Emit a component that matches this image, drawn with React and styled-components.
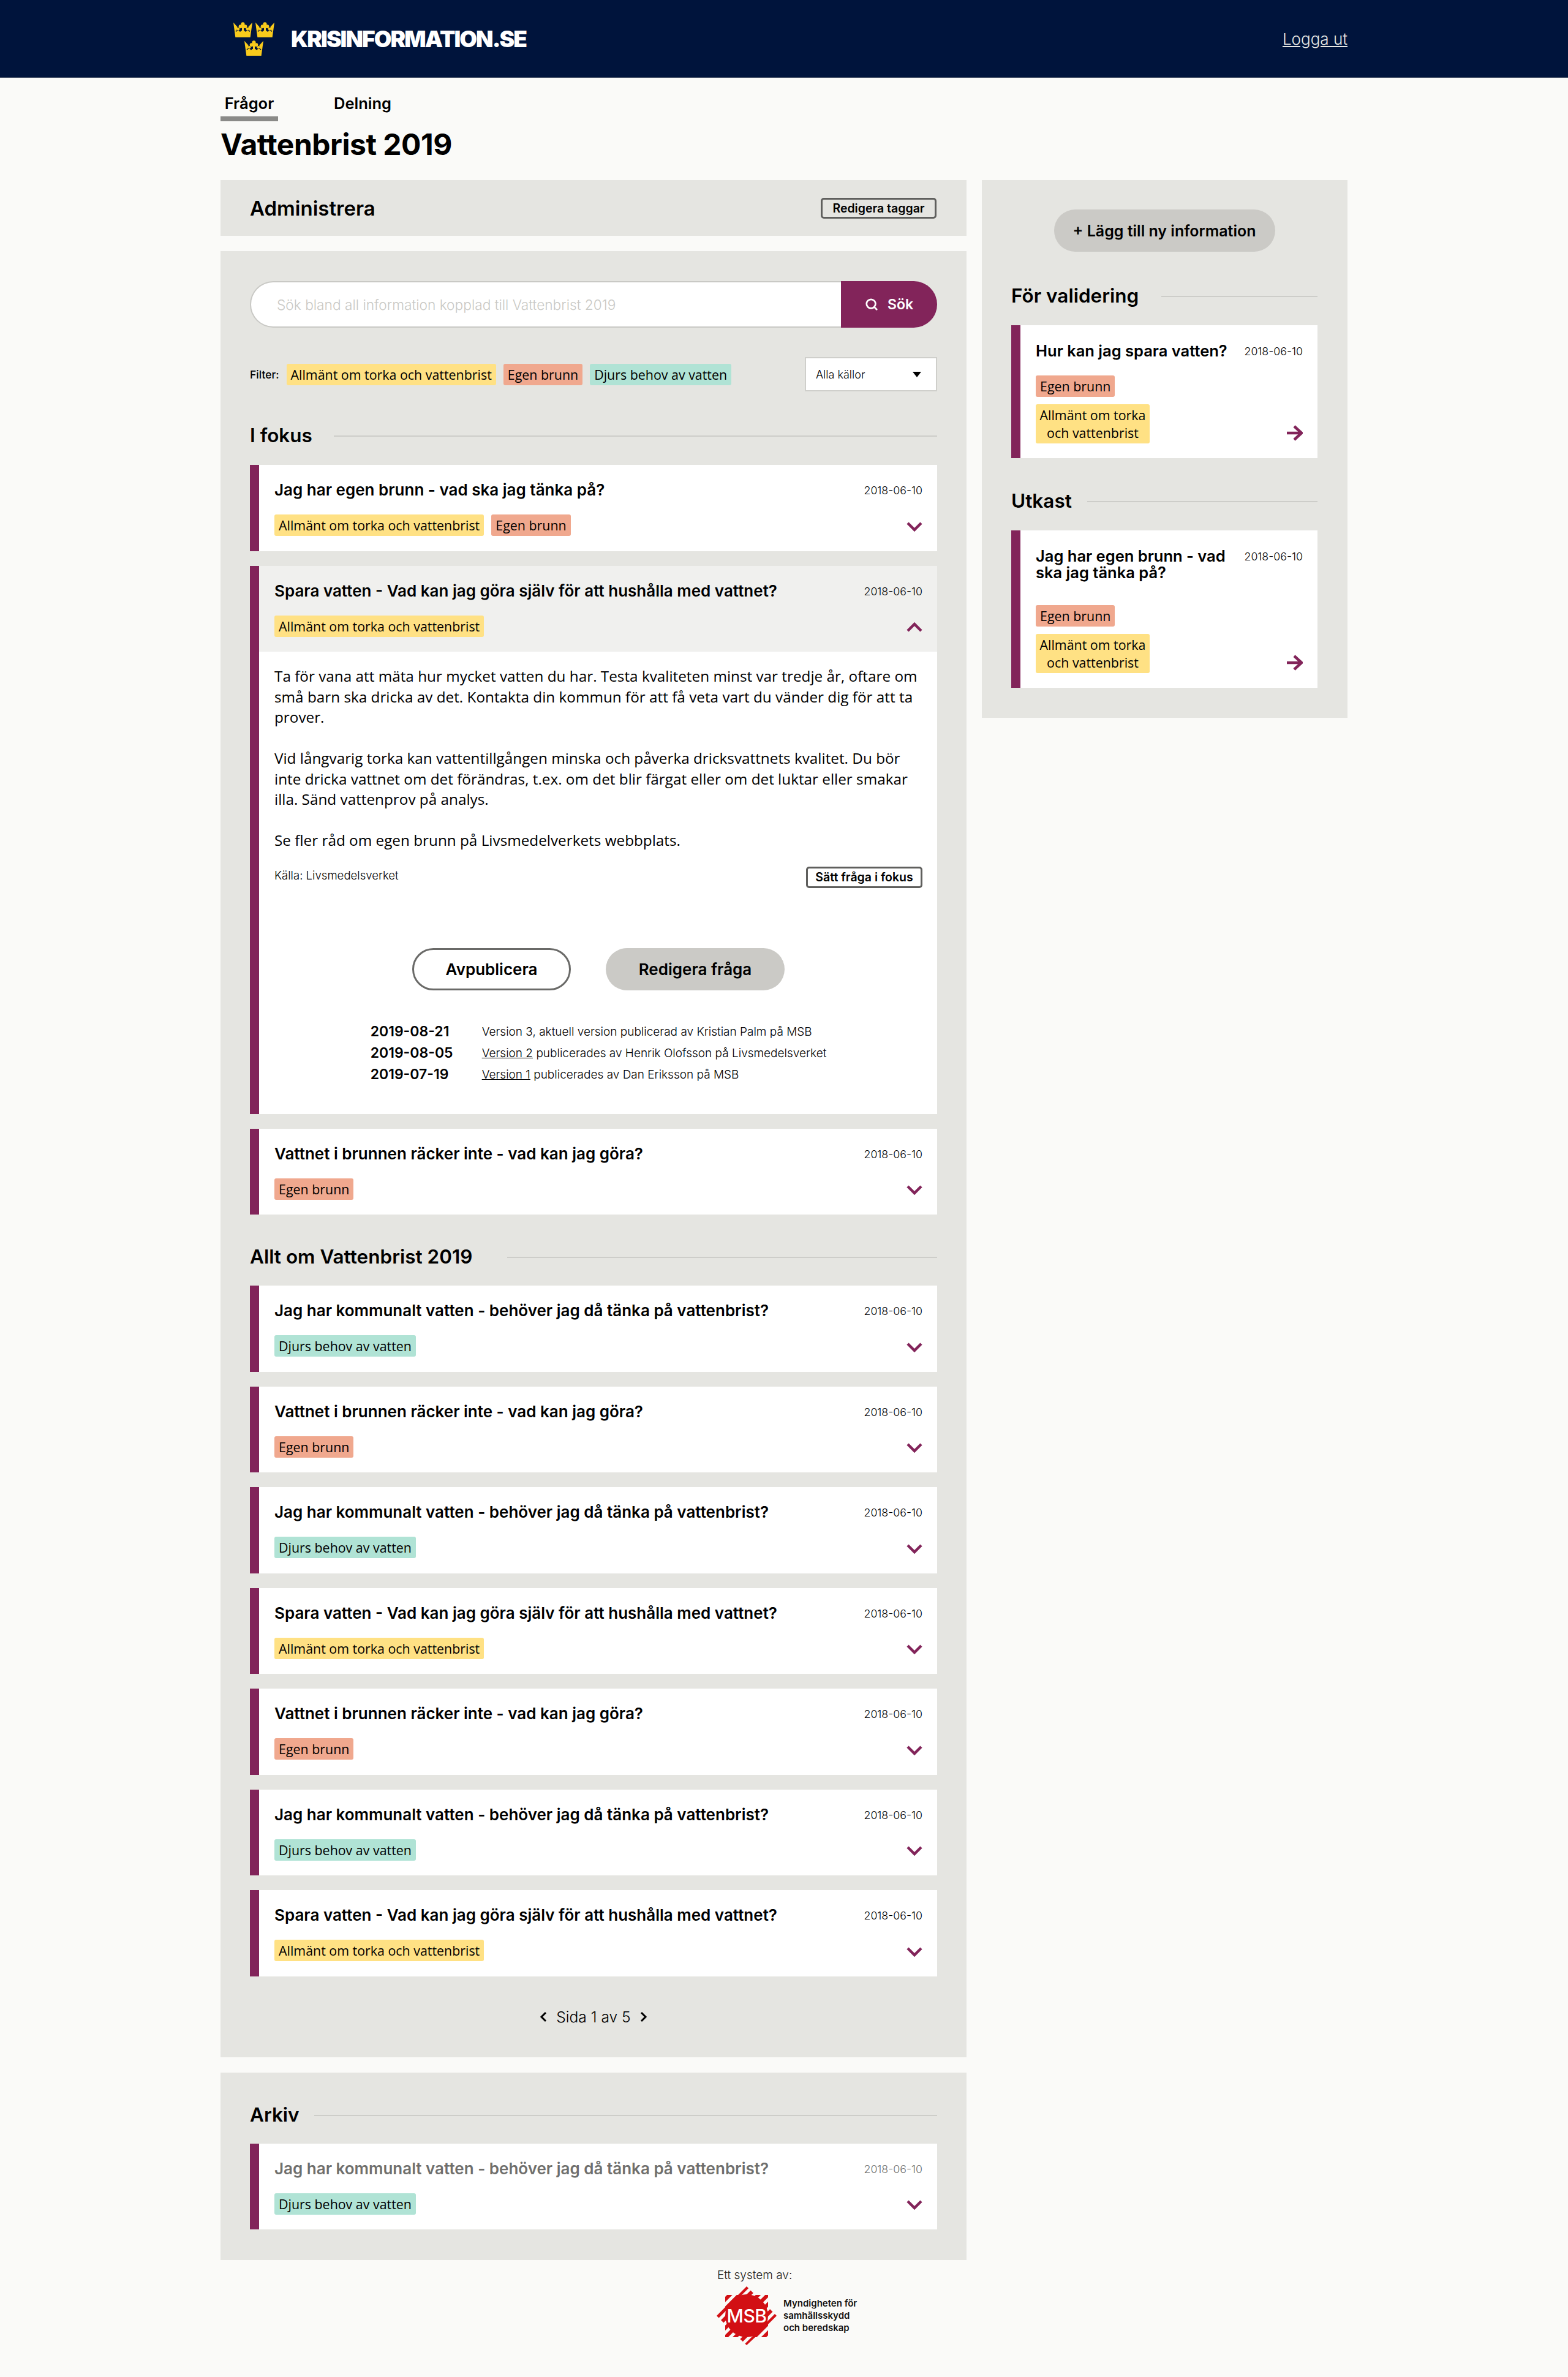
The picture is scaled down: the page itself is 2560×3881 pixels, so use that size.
import React from 'react'
import styled, { createGlobalStyle } from 'styled-components'
import { Search } from 'lucide-react'

const plum = '#82245a'
const head = 'Inter, "Open Sans", sans-serif'
const body = '"Open Sans", sans-serif'

const GlobalStyle = createGlobalStyle`
  html, body { margin: 0; padding: 0; background: #fafaf8; color: #000; font-family: ${body}; }
  * { box-sizing: border-box; }
`

const TopBar = styled.header`
  height: 127px;
  background: #00143c;
  border-bottom: 1px solid #3c4860;
`
const TopInner = styled.div`
  width: 1840px;
  margin: 0 auto;
  height: 100%;
  padding-left: 21px;
  display: flex;
  align-items: center;
  justify-content: space-between;
`
const Brand = styled.div`
  display: flex;
  align-items: center;
  gap: 27px;
`
const BrandName = styled.span`
  font-family: ${head};
  font-weight: 900;
  font-size: 37px;
  letter-spacing: -1.9px;
  color: #fff;
`
const Logout = styled.a`
  font-family: ${head};
  font-weight: 300;
  font-size: 26px;
  color: #e8e8e4;
  text-decoration: underline;
`
const Page = styled.div`
  width: 1840px;
  margin: 0 auto;
`
const Tabs = styled.nav`
  display: flex;
  gap: 90px;
  padding-top: 25px;
  height: 71px;
`
const Tab = styled.a`
  width: ${p => p.$w}px;
  height: 46px;
  text-align: center;
  font-family: ${head};
  font-weight: 600;
  font-size: 25.5px;
  line-height: 34px;
  border-bottom: ${p => (p.$active ? '8px solid #8a8a88' : 'none')};
`
const Title = styled.h1`
  margin: 0;
  height: 96px;
  padding-top: 10px;
  font-family: ${head};
  font-weight: 700;
  font-size: 48px;
  line-height: 56px;
  letter-spacing: -0.5px;
`
const Columns = styled.div`
  display: grid;
  grid-template-columns: 1218px 597px;
  gap: 25px;
  align-items: start;
`
const MainCol = styled.main`
  display: flex;
  flex-direction: column;
  gap: 25px;
`
const Panel = styled.section`
  background: #e5e5e1;
  padding: ${p => p.$pad || '48px'};
`
const AdminPanel = styled.section`
  height: 91px;
  background: #e5e5e1;
  padding: 0 49px 0 48px;
  display: flex;
  align-items: center;
  justify-content: space-between;
`
const AdminTitle = styled.h2`
  margin: 0;
  font-family: ${head};
  font-weight: 600;
  font-size: 33px;
`
const OutlineBtn = styled.button`
  height: ${p => p.$h}px;
  width: ${p => p.$w}px;
  padding: 0;
  font-family: ${head};
  font-weight: 600;
  font-size: 19.5px;
  color: #000;
  background: ${p => p.$bg || 'transparent'};
  border: 3px solid #5f5f5d;
  border-radius: 5px;
`
const SearchRow = styled.form`
  display: flex;
  height: 76px;
`
const SearchInput = styled.input`
  flex: 1;
  border: 2px solid #c9c9c5;
  border-right: 0;
  border-radius: 38px 0 0 38px;
  padding: 0 0 0 42px;
  background: #fff;
  font-family: ${head};
  font-weight: 300;
  font-size: 22.7px;
  &::placeholder { color: #c9c9c5; }
`
const SearchBtn = styled.button`
  width: 157px;
  border: 0;
  border-radius: 0 38px 38px 0;
  background: ${plum};
  color: #fff;
  font-family: ${head};
  font-weight: 600;
  font-size: 23px;
  display: flex;
  align-items: center;
  justify-content: center;
  gap: 15px;
`
const FilterRow = styled.div`
  display: flex;
  align-items: center;
  gap: 12px;
  margin-top: 48px;
  margin-bottom: 53px;
  height: 56px;
`
const FilterLabel = styled.span`
  font-family: ${head};
  font-weight: 500;
  font-size: 17.5px;
`
const Tag = styled.span`
  display: inline-block;
  max-width: ${p => (p.$narrow ? '186px' : 'none')};
  background: ${p => ({ yellow: '#ffe184', salmon: '#f0a88e', mint: '#b0e3d5' }[p.$tone])};
  border-radius: 3px;
  padding: ${p => (p.$narrow ? '3px 5px' : '3px 7px')};
  font-family: ${body};
  font-size: 21.4px;
  line-height: 29px;
  text-align: center;
  color: #000;
`
const SourceSelect = styled.div`
  margin-left: auto;
  width: 216px;
  height: 56px;
  background: #fff;
  border: 2px solid #cfcfcb;
  padding: 0 24px 0 16px;
  display: flex;
  align-items: center;
  justify-content: space-between;
  font-family: ${head};
  font-weight: 300;
  font-size: 18px;
`
const Caret = styled.i`
  border-left: 7.5px solid transparent;
  border-right: 7.5px solid transparent;
  border-top: 9px solid #000;
`
const SectionHead = styled.div`
  display: flex;
  align-items: center;
  gap: ${p => p.$gap}px;
  height: 40px;
  margin-bottom: ${p => p.$mb || 27}px;
`
const SectionTitle = styled.h3`
  margin: -3px 0 0;
  white-space: nowrap;
  font-family: ${head};
  font-weight: 600;
  font-size: 31.5px;
`
const Rule = styled.span`
  flex: 1;
  height: 2px;
  background: #cdcdc9;
`
const Stack = styled.div`
  display: flex;
  flex-direction: column;
  gap: 24px;
  margin-bottom: ${p => p.$mb || 0}px;
`
const Card = styled.article`
  background: #fff;
  border-left: 15px solid ${plum};
`
const CardHead = styled.div`
  height: 140.5px;
  padding: 27px 24px 0 25px;
  background: ${p => (p.$open ? '#f0f0ee' : '#fff')};
`
const TitleRow = styled.div`
  display: flex;
  justify-content: space-between;
  align-items: flex-start;
  margin-bottom: 26px;
`
const CardTitle = styled.h4`
  margin: 0;
  font-family: ${head};
  font-weight: 600;
  font-size: 26px;
  line-height: 28px;
  color: ${p => (p.$muted ? '#6f6f6d' : '#000')};
`
const DateText = styled.span`
  flex: none;
  padding-top: 2px;
  font-family: ${head};
  font-weight: 300;
  font-size: 17.8px;
  line-height: 26px;
  color: ${p => (p.$muted ? '#6f6f6d' : '#000')};
`
const TagRow = styled.div`
  display: flex;
  align-items: center;
  justify-content: space-between;
`
const Tags = styled.div`
  display: flex;
  gap: 12px;
`
const ChevronIcon = styled.svg`
  margin-top: 4px;
`
const Expanded = styled.div`
  padding: 23px 24px 47px 25px;
`
const Para = styled.p`
  margin: 0 0 33.5px;
  font-family: ${body};
  font-size: 24.3px;
  line-height: 33.5px;
`
const SourceRow = styled.div`
  display: flex;
  justify-content: space-between;
  align-items: flex-start;
  margin-top: -7.5px;
`
const SourceText = styled.span`
  font-family: ${head};
  font-weight: 300;
  font-size: 18.6px;
  line-height: 28px;
`
const Actions = styled.div`
  display: flex;
  justify-content: center;
  gap: 57px;
  margin: 98px 0 50px;
`
const Pill = styled.button`
  height: 69px;
  width: ${p => p.$w}px;
  border-radius: 35px;
  border: ${p => (p.$outline ? '3px solid #6a6a68' : '0')};
  background: ${p => (p.$outline ? '#fff' : '#cbcac6')};
  color: #000;
  font-family: ${head};
  font-weight: 600;
  font-size: 26px;
`
const History = styled.div`
  display: grid;
  grid-template-columns: 182px auto;
  grid-auto-rows: 35px;
  justify-content: center;
  align-items: center;
`
const HistoryDate = styled.span`
  font-family: ${head};
  font-weight: 600;
  font-size: 23px;
`
const HistoryText = styled.span`
  font-family: ${head};
  font-weight: 300;
  font-size: 19px;
  a { color: inherit; text-decoration: underline; }
`
const Pager = styled.div`
  height: 132px;
  display: flex;
  align-items: center;
  justify-content: center;
  gap: 15px;
  font-family: ${head};
  font-weight: 300;
  font-size: 24.6px;
`
const SideCol = styled.aside`
  background: #e5e5e1;
  padding: 48px 49px 49px 48px;
`
const AddBtn = styled.button`
  display: block;
  width: 361px;
  height: 69px;
  margin: 0 auto 53px;
  border: 0;
  border-radius: 35px;
  background: #cbcac6;
  color: #000;
  font-family: ${head};
  font-weight: 600;
  font-size: 25px;
`
const SideCard = styled.article`
  background: #fff;
  border-left: 15px solid ${plum};
  padding: 28px 24px 24px 25px;
  margin-bottom: ${p => p.$mb || 0}px;
`
const SideTitleRow = styled.div`
  display: flex;
  justify-content: space-between;
  align-items: flex-start;
  gap: 8px;
  margin-bottom: ${p => p.$gap}px;
`
const SideTitle = styled.h4`
  margin: 0;
  font-family: ${head};
  font-weight: 600;
  font-size: 25.5px;
  line-height: 27px;
`
const SideFoot = styled.div`
  display: flex;
  align-items: flex-end;
  justify-content: space-between;
`
const SideTags = styled.div`
  display: flex;
  flex-direction: column;
  align-items: flex-start;
  gap: 12px;
`
const ArrowIcon = styled.svg`
  margin-bottom: 4px;
`
const PageFoot = styled.footer`
  width: 1840px;
  margin: 0 auto;
  height: 193px;
  padding: 12px 0 0 811px;
`
const FooterLabel = styled.div`
  font-family: ${head};
  font-weight: 300;
  font-size: 19px;
  line-height: 26px;
  color: #222;
`
const MsbRow = styled.div`
  display: flex;
  align-items: center;
  gap: 11px;
  margin-top: 5px;
  margin-left: -1px;
`
const MsbName = styled.div`
  font-family: ${head};
  font-weight: 600;
  font-size: 15px;
  line-height: 20px;
  color: #111;
`
const CrownMark = styled.div`
  display: grid;
  grid-template-columns: 31px 31px;
  column-gap: 5px;
  row-gap: 5px;
  justify-items: center;
  & > :last-child { grid-column: 1 / 3; }
`

const Crown = () => (
  <svg width="31" height="25" viewBox="0 0 93 75">
    <g fill="#f9cb1c">
      <path d="M0 2 L20 24 L16 42 H77 L73 24 L93 2 L83 75 H10 Z" />
      <circle cx="46.5" cy="10" r="9" />
      <circle cx="35" cy="22" r="9" />
      <circle cx="58" cy="22" r="9" />
      <rect x="42" y="18" width="9" height="26" />
      <circle cx="24" cy="34" r="7" />
      <circle cx="69" cy="34" r="7" />
    </g>
    <g fill="#00143c">
      <circle cx="33" cy="42" r="5" />
      <circle cx="60" cy="42" r="5" />
      <circle cx="14" cy="44" r="3" />
      <circle cx="79" cy="44" r="3" />
    </g>
  </svg>
)

const Chevron = ({ up }) => (
  <ChevronIcon width="26" height="16" viewBox="0 0 26 16">
    <path d={up ? 'M2 14 L13 3 L24 14' : 'M2 2 L13 13 L24 2'} fill="none" stroke={plum} strokeWidth="4.5" />
  </ChevronIcon>
)

const Arrow = () => (
  <ArrowIcon width="27" height="26" viewBox="0 0 27 26">
    <path d="M1 13 H24 M13 2 L25 13 L13 24" fill="none" stroke={plum} strokeWidth="4.5" />
  </ArrowIcon>
)

const PagerArrow = ({ left }) => (
  <svg width="12" height="18" viewBox="0 0 12 18">
    <path d={left ? 'M10 2 L3 9 L10 16' : 'M2 2 L9 9 L2 16'} fill="none" stroke="#000" strokeWidth="3" />
  </svg>
)

const MsbLogo = () => (
  <svg width="98" height="96" viewBox="0 0 98 96">
    <defs>
      <pattern id="stripes" width="11" height="11" patternUnits="userSpaceOnUse" patternTransform="rotate(-45)">
        <rect width="11" height="6" fill="#d20f14" />
      </pattern>
    </defs>
    <polygon fill="url(#stripes)" points="14,14 35,14 49,0 63,14 84,14 84,34 98,48 84,62 84,83 63,83 49,96 35,83 14,83 14,62 0,48 14,34" />
    <circle cx="49" cy="48" r="35" fill="#d20f14" />
    <text x="49" y="59" textAnchor="middle" fontFamily="Inter, sans-serif" fontWeight="500" fontSize="30" letterSpacing="-0.5" fill="#fff">MSB</text>
  </svg>
)

const Y = ['yellow', 'Allmänt om torka och vattenbrist']
const S = ['salmon', 'Egen brunn']
const M = ['mint', 'Djurs behov av vatten']

const Q1 = 'Jag har egen brunn - vad ska jag tänka på?'
const Q2 = 'Spara vatten - Vad kan jag göra själv för att hushålla med vattnet?'
const Q3 = 'Vattnet i brunnen räcker inte - vad kan jag göra?'
const Q4 = 'Jag har kommunalt vatten - behöver jag då tänka på vattenbrist?'

const allQuestions = [[Q4, M], [Q3, S], [Q4, M], [Q2, Y], [Q3, S], [Q4, M], [Q2, Y]]

function Question({ title, tags, open, muted, children }) {
  return (
    <Card>
      <CardHead $open={open}>
        <TitleRow>
          <CardTitle $muted={muted}>{title}</CardTitle>
          <DateText $muted={muted}>2018-06-10</DateText>
        </TitleRow>
        <TagRow>
          <Tags>
            {tags.map(([tone, text]) => <Tag key={text} $tone={tone}>{text}</Tag>)}
          </Tags>
          <Chevron up={open} />
        </TagRow>
      </CardHead>
      {children}
    </Card>
  )
}

function SideItem({ title, gap, mb }) {
  return (
    <SideCard $mb={mb}>
      <SideTitleRow $gap={gap}>
        <SideTitle>{title}</SideTitle>
        <DateText>2018-06-10</DateText>
      </SideTitleRow>
      <SideFoot>
        <SideTags>
          <Tag $tone="salmon">Egen brunn</Tag>
          <Tag $tone="yellow" $narrow>Allmänt om torka och vattenbrist</Tag>
        </SideTags>
        <Arrow />
      </SideFoot>
    </SideCard>
  )
}

export default function App() {
  return (
    <>
      <GlobalStyle />
      <TopBar>
        <TopInner>
          <Brand>
            <CrownMark>
              <Crown />
              <Crown />
              <Crown />
            </CrownMark>
            <BrandName>KRISINFORMATION.SE</BrandName>
          </Brand>
          <Logout>Logga ut</Logout>
        </TopInner>
      </TopBar>
      <Page>
        <Tabs>
          <Tab $active $w={94}>Frågor</Tab>
          <Tab $w={96}>Delning</Tab>
        </Tabs>
        <Title>Vattenbrist 2019</Title>
        <Columns>
          <MainCol>
            <AdminPanel>
              <AdminTitle>Administrera</AdminTitle>
              <OutlineBtn $w={189} $h={34}>Redigera taggar</OutlineBtn>
            </AdminPanel>
            <Panel $pad="49px 48px 0">
              <SearchRow>
                <SearchInput placeholder="Sök bland all information kopplad till Vattenbrist 2019" />
                <SearchBtn type="button"><Search size={22} strokeWidth={3} />Sök</SearchBtn>
              </SearchRow>
              <FilterRow>
                <FilterLabel>Filter:</FilterLabel>
                <Tag $tone="yellow">{Y[1]}</Tag>
                <Tag $tone="salmon">{S[1]}</Tag>
                <Tag $tone="mint">{M[1]}</Tag>
                <SourceSelect>Alla källor<Caret /></SourceSelect>
              </FilterRow>
              <SectionHead $gap={35}><SectionTitle>I fokus</SectionTitle><Rule /></SectionHead>
              <Stack $mb={50}>
                <Question title={Q1} tags={[Y, S]} />
                <Question title={Q2} tags={[Y]} open>
                  <Expanded>
                    <Para>Ta för vana att mäta hur mycket vatten du har. Testa kvaliteten minst var tredje år, oftare om små barn ska dricka av det. Kontakta din kommun för att få veta vart du vänder dig för att ta prover.</Para>
                    <Para>Vid långvarig torka kan vattentillgången minska och påverka dricksvattnets kvalitet. Du bör inte dricka vattnet om det förändras, t.ex. om det blir färgat eller om det luktar eller smakar illa. Sänd vattenprov på analys.</Para>
                    <Para>Se fler råd om egen brunn på Livsmedelverkets webbplats.</Para>
                    <SourceRow>
                      <SourceText>Källa: Livsmedelsverket</SourceText>
                      <OutlineBtn $w={190} $h={35} $bg="#fff">Sätt fråga i fokus</OutlineBtn>
                    </SourceRow>
                    <Actions>
                      <Pill $outline $w={259}>Avpublicera</Pill>
                      <Pill $w={292}>Redigera fråga</Pill>
                    </Actions>
                    <History>
                      <HistoryDate>2019-08-21</HistoryDate>
                      <HistoryText>Version 3, aktuell version publicerad av Kristian Palm på MSB</HistoryText>
                      <HistoryDate>2019-08-05</HistoryDate>
                      <HistoryText><a>Version 2</a> publicerades av Henrik Olofsson på Livsmedelsverket</HistoryText>
                      <HistoryDate>2019-07-19</HistoryDate>
                      <HistoryText><a>Version 1</a> publicerades av Dan Eriksson på MSB</HistoryText>
                    </History>
                  </Expanded>
                </Question>
                <Question title={Q3} tags={[S]} />
              </Stack>
              <SectionHead $gap={57} $mb={26}><SectionTitle>Allt om Vattenbrist 2019</SectionTitle><Rule /></SectionHead>
              <Stack>
                {allQuestions.map(([title, tag], i) => <Question key={i} title={title} tags={[tag]} />)}
              </Stack>
              <Pager><PagerArrow left />Sida 1 av 5<PagerArrow /></Pager>
            </Panel>
            <Panel $pad="50px 48px">
              <SectionHead $gap={24} $mb={26}><SectionTitle>Arkiv</SectionTitle><Rule /></SectionHead>
              <Question title={Q4} tags={[M]} muted />
            </Panel>
          </MainCol>
          <SideCol>
            <AddBtn>+ Lägg till ny information</AddBtn>
            <SectionHead $gap={37}><SectionTitle>För validering</SectionTitle><Rule /></SectionHead>
            <SideItem title="Hur kan jag spara vatten?" gap={26} mb={51} />
            <SectionHead $gap={25}><SectionTitle>Utkast</SectionTitle><Rule /></SectionHead>
            <SideItem title="Jag har egen brunn - vad ska jag tänka på?" gap={40} />
          </SideCol>
        </Columns>
      </Page>
      <PageFoot>
        <FooterLabel>Ett system av:</FooterLabel>
        <MsbRow>
          <MsbLogo />
          <MsbName>Myndigheten för<br />samhällsskydd<br />och beredskap</MsbName>
        </MsbRow>
      </PageFoot>
    </>
  )
}
